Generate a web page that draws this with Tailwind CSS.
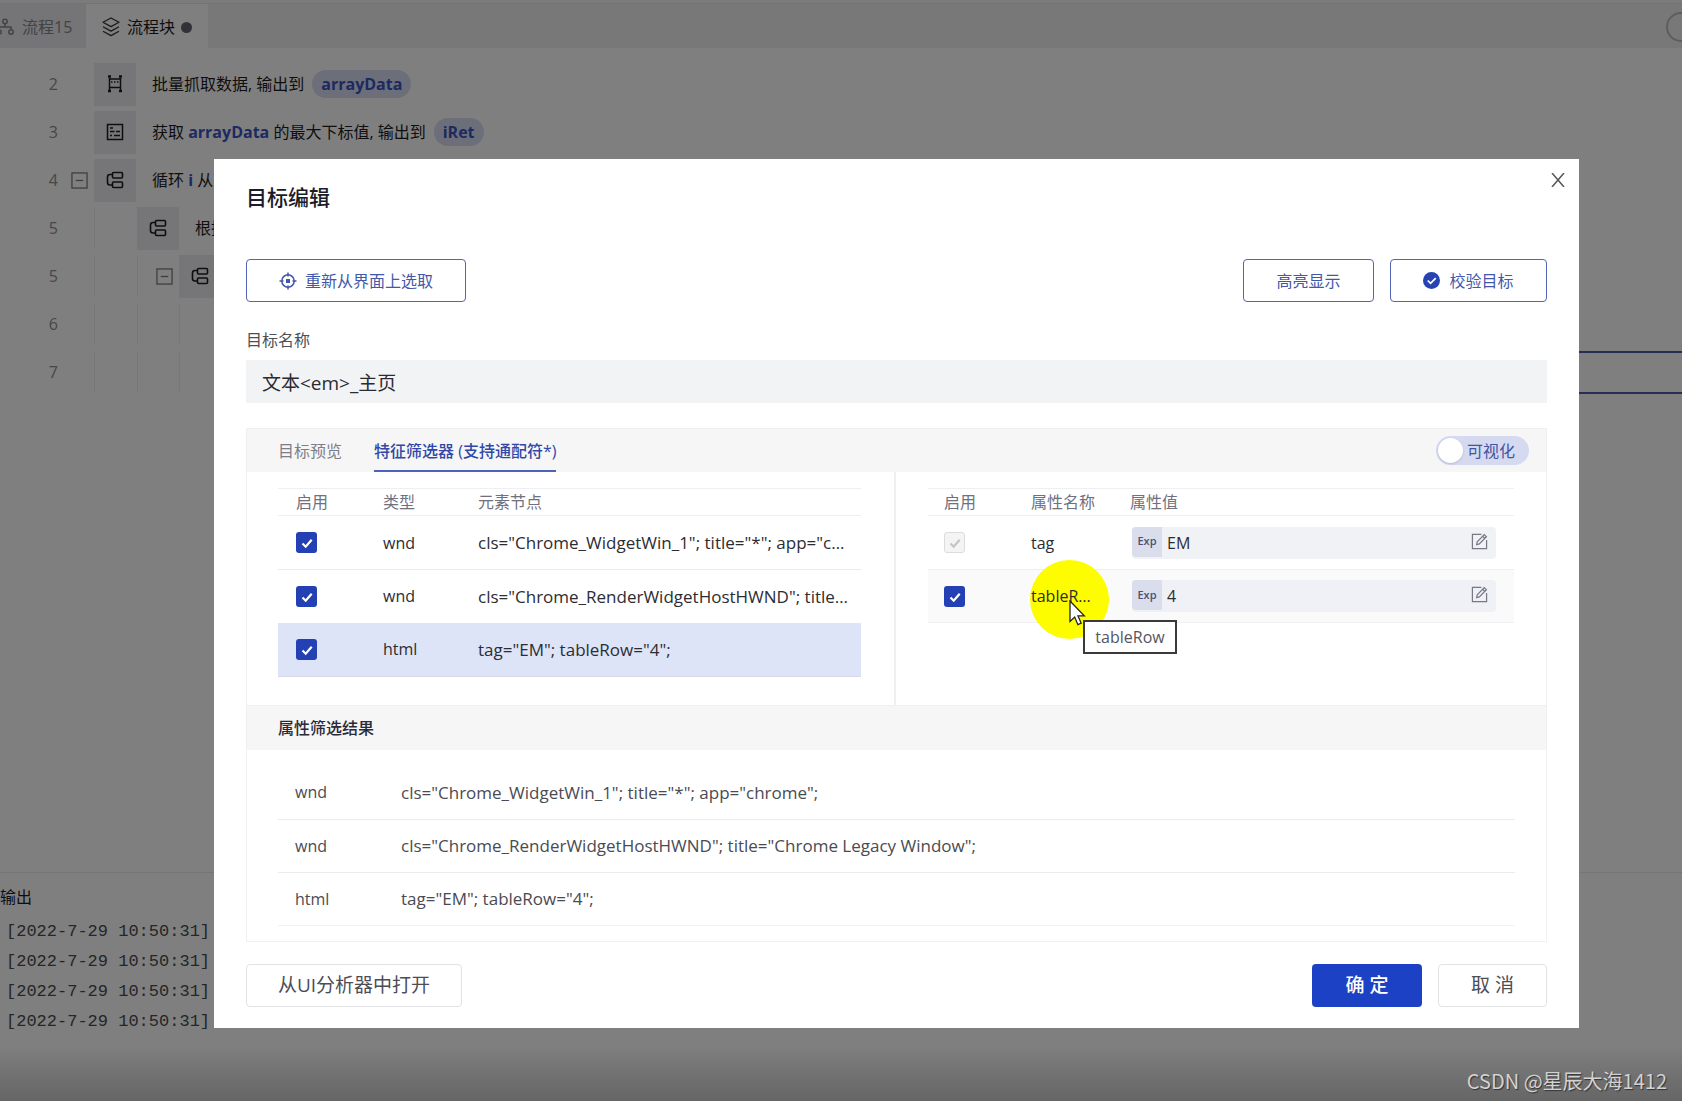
<!DOCTYPE html>
<html lang="zh-CN">
<head>
<meta charset="utf-8">
<meta name="viewport" content="width=device-width, initial-scale=1">
<title>目标编辑</title>
<script src="https://cdn.jsdelivr.net/npm/@tailwindcss/browser@4"></script>
</head>
<body class="relative min-h-screen overflow-hidden bg-white font-['Open_Sans','Noto_Sans_CJK_SC',sans-serif] text-base text-[#2c2d33]">

<svg class="hidden" aria-hidden="true">
  <symbol id="i-branch" viewBox="0 0 18 18"><g fill="none" stroke="currentColor" stroke-width="1.6"><rect x="6.5" y="1.500" width="10" height="5.500" rx="1"/><rect x="6.500" y="11" width="10" height="5.500" rx="1"/><path d="M6.500 3.500H4A2.500 2.500 0 0 0 1.500 6v5.500a2.500 2.500 0 0 0 2.500 2.500h2.500"/></g></symbol>
  <symbol id="i-minus" viewBox="0 0 18 18"><g fill="none" stroke="currentColor" stroke-width="1.300"><rect x="1" y="1" width="16" height="16"/><path d="M5 9h8"/></g></symbol>
  <symbol id="i-check" viewBox="0 0 14 14"><path d="M2.500 7.500l3.200 3.200 6-7" fill="none" stroke="currentColor" stroke-width="2.200"/></symbol>
  <symbol id="i-edit" viewBox="0 0 18 18"><g fill="none" stroke="currentColor" stroke-width="1.300"><path d="M11 1.500H1.500v15h15V7.500"/><path d="M6 12.300l.6-3L14 1.700l2.300 2.300-7.500 7.600z"/><path d="M12.300 3.500l2.300 2.300"/></g></symbol>
</svg>

<!-- Editor -->
<div class="flex h-screen flex-col" aria-hidden="true">
  <div class="h-1 border-b border-[#e6e6e8] bg-[#f6f6f6]"></div>
  <nav class="flex h-11 shrink-0 items-stretch bg-[#f0f0f3]">
    <a href="#" class="flex w-[86px] items-center gap-2 bg-[#ebebee] pt-[2px] text-[#85868a]">
      <svg class="-ml-1 h-[18px] w-[18px]" viewBox="0 0 18 18" fill="none" stroke="currentColor" stroke-width="1.500"><circle cx="9" cy="3.500" r="2.200"/><circle cx="3" cy="14" r="2.200"/><circle cx="15" cy="14" r="2.200"/><path d="M9 6v3M3 11.500V9h12v2.500"/></svg>
      流程15</a>
    <a href="#" class="flex items-center gap-[6px] bg-white pt-[2px] pr-4 pl-[15px] text-[#1c1c1c]">
      <svg class="h-5 w-5 text-[#333]" viewBox="0 0 20 20" fill="none" stroke="currentColor" stroke-width="1.300" stroke-linejoin="round"><path d="M10 1l8 4.300-8 4.300-8-4.300z"/><path d="M2 9.800l8 4.300 8-4.300M2 14.300l8 4.300 8-4.300"/></svg>
      流程块<span class="h-[11px] w-[11px] rounded-full bg-[#61656f]"></span></a>
    <span class="mt-2 -mr-4 ml-auto h-[30px] w-8 rounded-full border-2 border-[#bbb]"></span>
  </nav>

  <ol class="flex flex-1 flex-col pt-3 text-[#1c1c1c]">
    <li class="flex h-12 items-center">
      <span class="w-[58px] text-right text-[#8e8e90]">2</span>
      <span class="ml-9 flex h-[43px] w-[42px] items-center justify-center bg-[#ededf0]"><svg class="h-[18px] w-[18px]" viewBox="0 0 18 18" fill="none" stroke="currentColor" stroke-width="1.500"><path d="M3.500 3v12M14.500 3v12M4 4h10M4 12.500h10"/><path d="M5 7h8" stroke-dasharray="1.500 1.500"/><path d="M2 1.500h3M13 1.500h3M2 16h3M13 16h3" stroke-width="2.500"/></svg></span>
      <span class="ml-4">批量抓取数据, 输出到</span>
      <span class="ml-2 rounded-full bg-[#d9dff5] px-[9px] font-bold leading-7 text-[#3a55c4]">arrayData</span>
    </li>
    <li class="flex h-12 items-center">
      <span class="w-[58px] text-right text-[#8e8e90]">3</span>
      <span class="ml-9 flex h-[43px] w-[42px] items-center justify-center bg-[#ededf0]"><svg class="h-[18px] w-[18px]" viewBox="0 0 18 18" fill="none" stroke="currentColor" stroke-width="1.500"><rect x="1.500" y="1.500" width="15" height="15"/><path d="M4 5h3M4 8.500h4.500M10 8.500h4M4 12.500h2M8 12.500h6"/></svg></span>
      <span class="ml-4">获取 <b class="font-bold text-[#3a55c4]">arrayData</b> 的最大下标值, 输出到</span>
      <span class="ml-2 rounded-full bg-[#d9dff5] px-[9px] font-bold leading-7 text-[#3a55c4]">iRet</span>
    </li>
    <li class="flex h-12 items-center">
      <span class="w-[58px] text-right text-[#8e8e90]">4</span>
      <svg class="ml-[13px] h-[17px] w-[17px] text-[#777]"><use href="#i-minus"/></svg>
      <span class="ml-[6px] flex h-[43px] w-[42px] items-center justify-center bg-[#ededf0]"><svg class="h-[18px] w-[18px]"><use href="#i-branch"/></svg></span>
      <span class="ml-4">循环 <b class="font-bold text-[#3a55c4]">i</b> 从</span>
    </li>
    <li class="flex h-12 items-center">
      <span class="w-[58px] text-right text-[#8e8e90]">5</span>
      <span class="ml-9 h-10 w-[43px] border-l border-[#eee]"></span>
      <span class="flex h-[43px] w-[42px] items-center justify-center bg-[#ededf0]"><svg class="h-[18px] w-[18px]"><use href="#i-branch"/></svg></span>
      <span class="ml-4">根据</span>
    </li>
    <li class="flex h-12 items-center">
      <span class="w-[58px] text-right text-[#8e8e90]">5</span>
      <span class="ml-9 h-10 w-[43px] border-l border-[#eee]"></span>
      <span class="h-10 w-[19px] border-l border-[#eee]"></span>
      <svg class="h-[17px] w-[17px] text-[#777]"><use href="#i-minus"/></svg>
      <span class="ml-[6px] flex h-[43px] w-[42px] items-center justify-center bg-[#ededf0]"><svg class="h-[18px] w-[18px]"><use href="#i-branch"/></svg></span>
    </li>
    <li class="flex h-12 items-center">
      <span class="w-[58px] text-right text-[#8e8e90]">6</span>
      <span class="ml-9 h-10 w-[43px] border-l border-[#eee]"></span>
      <span class="h-10 w-[42px] border-l border-[#eee]"></span>
      <span class="h-10 w-[42px] border-l border-[#eee]"></span>
    </li>
    <li class="flex h-12 items-center">
      <span class="w-[58px] text-right text-[#8e8e90]">7</span>
      <span class="ml-9 h-10 w-[43px] border-l border-[#eee]"></span>
      <span class="h-10 w-[42px] border-l border-[#eee]"></span>
      <span class="h-10 w-[42px] border-l border-[#eee]"></span>
      <span class="h-[43px] flex-1 border-y-2 border-[#4b5fa8]"></span>
    </li>
  </ol>

  <section class="flex h-[229px] shrink-0 flex-col border-t border-[#ededed] pt-3">
    <h2 class="text-[#1c1c1c]">输出</h2>
    <div class="mt-2 pl-[6px] font-['Liberation_Mono',monospace] text-[17px] leading-[30px] text-[#4c4c4c]">
      <p>[2022-7-29 10:50:31]</p>
      <p>[2022-7-29 10:50:31]</p>
      <p>[2022-7-29 10:50:31]</p>
      <p>[2022-7-29 10:50:31]</p>
    </div>
  </section>
</div>

<!-- Dimmed backdrop with the dialog -->
<div class="absolute inset-0 bg-black/50 pt-[159px] pr-[103px] pl-[214px]">
  <div class="absolute inset-x-0 bottom-0 h-14 bg-linear-to-b from-transparent to-black/20"></div>
  <div role="dialog" aria-labelledby="dlg-title" class="relative bg-white px-8 pt-5 pb-[21px]">
    <button aria-label="关闭" class="absolute top-[14px] right-[14px] text-[#555]"><svg class="h-[14px] w-[14px]" viewBox="0 0 14 14" fill="none" stroke="currentColor" stroke-width="1.500"><path d="M1 0l12 14M13 0L1 14"/></svg></button>
    <h1 id="dlg-title" class="text-[21px] leading-9 font-medium text-[#1b1c26]">目标编辑</h1>

    <div class="mt-11 flex gap-4">
      <button class="flex h-[43px] w-[220px] items-center justify-center gap-2 rounded border border-[#5265b4] text-[#4358a8]">
        <svg class="h-[18px] w-[18px]" viewBox="0 0 18 18" fill="none" stroke="currentColor" stroke-width="1.500"><circle cx="9" cy="9" r="6.200"/><rect x="7" y="7" width="4" height="4" fill="currentColor" stroke="none"/><path d="M9 .5v4M9 13.500v4M.5 9h4M13.500 9h4"/></svg>
        重新从界面上选取</button>
      <button class="ml-auto h-[43px] w-[131px] rounded border border-[#5265b4] text-[#4358a8]">高亮显示</button>
      <button class="flex h-[43px] w-[157px] items-center justify-center gap-[9px] rounded border border-[#5265b4] text-[#4358a8]">
        <svg class="h-[17px] w-[17px]" viewBox="0 0 18 18"><circle cx="9" cy="9" r="9" fill="#2643b4"/><path d="M5 9l3 3 5.500-5.500" fill="none" stroke="#fff" stroke-width="1.800"/></svg>
        校验目标</button>
    </div>

    <label for="target-name" class="mt-[26px] block leading-6 text-[#4d4e57]">目标名称</label>
    <input id="target-name" value="文本&lt;em&gt;_主页" class="mt-2 block h-[43px] w-full bg-[#f2f3f5] px-4 text-[19px] text-[#2a2b30]">

    <section class="mt-[25px] border border-[#f0f0f1]">
      <div class="flex h-[43px] items-stretch bg-[#f6f6f7] pr-[17px] pl-[31px]">
        <a href="#" class="mr-8 flex items-center text-[#7d7e88]">目标预览</a>
        <a href="#" class="flex items-center border-b-2 border-[#4d62b8] pt-[2px] font-medium text-[#3048a8]">特征筛选器 (支持通配符*)</a>
        <label class="my-auto ml-auto flex h-[29px] w-[93px] items-center rounded-full bg-[#d5daf0] pl-[2px] text-[#4255a3]">
          <input type="checkbox" role="switch" class="mr-1 h-[25px] w-[25px] appearance-none rounded-full bg-white shadow">可视化</label>
      </div>

      <div class="grid grid-cols-[649fr_650fr]">
        <div class="border-r-2 border-[#f0f0f2] pt-4 pr-[33px] pb-7 pl-[31px]">
          <table class="w-full table-fixed border-collapse text-left">
            <thead>
              <tr class="h-[27px] border-y border-[#efeff1] text-[#6f7180]">
                <th class="w-[87px] pl-[18px] font-normal leading-[25px]">启用</th>
                <th class="w-[95px] pl-[18px] font-normal leading-[25px]">类型</th>
                <th class="pl-[18px] font-normal leading-[25px]">元素节点</th>
              </tr>
            </thead>
            <tbody>
              <tr class="h-[54px] border-b border-[#eaeceb]">
                <td class="pl-[18px]"><label class="relative block h-[21px] w-[21px]"><input type="checkbox" checked aria-label="启用" class="block h-[21px] w-[21px] appearance-none rounded-[3px] bg-[#2340b4]"><svg class="absolute top-1 left-1 h-[14px] w-[14px] text-white"><use href="#i-check"/></svg></label></td>
                <td class="pl-[18px]">wnd</td>
                <td class="truncate pr-[10px] pl-[18px] text-[17px]">cls="Chrome_WidgetWin_1"; title="*"; app="chrome";</td>
              </tr>
              <tr class="h-[53px]">
                <td class="pl-[18px]"><label class="relative block h-[21px] w-[21px]"><input type="checkbox" checked aria-label="启用" class="block h-[21px] w-[21px] appearance-none rounded-[3px] bg-[#2340b4]"><svg class="absolute top-1 left-1 h-[14px] w-[14px] text-white"><use href="#i-check"/></svg></label></td>
                <td class="pl-[18px]">wnd</td>
                <td class="truncate pr-[10px] pl-[18px] text-[17px]">cls="Chrome_RenderWidgetHostHWND"; title="Chrome Legacy Window";</td>
              </tr>
              <tr class="h-[54px] border-b border-[#d5d9ea] bg-[#dde4f8]">
                <td class="pl-[18px]"><label class="relative block h-[21px] w-[21px]"><input type="checkbox" checked aria-label="启用" class="block h-[21px] w-[21px] appearance-none rounded-[3px] bg-[#2340b4]"><svg class="absolute top-1 left-1 h-[14px] w-[14px] text-white"><use href="#i-check"/></svg></label></td>
                <td class="pl-[18px]">html</td>
                <td class="truncate pr-[10px] pl-[18px] text-[17px]">tag="EM"; tableRow="4";</td>
              </tr>
            </tbody>
          </table>
        </div>

        <div class="pt-4 pr-8 pb-[29px] pl-8">
          <table class="w-full table-fixed border-collapse text-left">
            <thead>
              <tr class="h-[27px] border-y border-[#efeff1] text-[#6f7180]">
                <th class="w-[87px] pl-4 font-normal leading-[25px]">启用</th>
                <th class="w-[99px] pl-4 font-normal leading-[25px]">属性名称</th>
                <th class="pl-4 font-normal leading-[25px]">属性值</th>
              </tr>
            </thead>
            <tbody>
              <tr class="h-[54px] border-b border-[#eeeef0]">
                <td class="pl-4"><label class="relative block h-[21px] w-[21px]"><input type="checkbox" checked disabled aria-label="启用" class="block h-[21px] w-[21px] appearance-none rounded-[3px] border border-[#dcdcdc] bg-[#f4f4f4]"><svg class="absolute top-1 left-1 h-[14px] w-[14px] text-[#c4c4c4]"><use href="#i-check"/></svg></label></td>
                <td class="pl-4">tag</td>
                <td class="pr-[18px] pl-[18px]">
                  <div class="flex h-8 items-start rounded bg-[#f1f2f5]">
                    <span class="flex h-[30px] w-[30px] items-center justify-center rounded-l bg-[#d9ddec] text-[11px] font-semibold text-[#4a5170]">Exp</span>
                    <input aria-label="tag" value="EM" class="h-8 min-w-0 flex-1 bg-transparent pl-[5px]">
                    <button aria-label="编辑" class="mt-[6px] mr-2 text-[#777985]"><svg class="h-[17px] w-[17px]"><use href="#i-edit"/></svg></button>
                  </div>
                </td>
              </tr>
              <tr class="h-[53px] border-b border-[#f0f0f2] bg-[#fafafb]">
                <td class="pl-4"><label class="relative block h-[21px] w-[21px]"><input type="checkbox" checked aria-label="启用" class="block h-[21px] w-[21px] appearance-none rounded-[3px] bg-[#2340b4]"><svg class="absolute top-1 left-1 h-[14px] w-[14px] text-white"><use href="#i-check"/></svg></label></td>
                <td class="pl-4">
                  <div class="relative">
                    <span class="absolute -top-6 -left-px h-[79px] w-[79px] rounded-full bg-[#fdfd00]"></span>
                    <span class="relative block w-[62px] truncate">tableRow</span>
                    <svg class="absolute top-4 left-[38px] z-20 h-[26px] w-[17px]" viewBox="0 0 17 26"><path d="M1 1v20.500l4.700-4.400 3.200 7.600 3.300-1.500-3.200-7.300h6.300z" fill="#fff" stroke="#222" stroke-width="1.300"/></svg>
                    <div role="tooltip" class="absolute top-9 left-[52px] z-10 h-[34px] w-[94px] border-2 border-[#3a3a3a] bg-white text-center leading-[30px] text-[#55565c]">tableRow</div>
                  </div>
                </td>
                <td class="pr-[18px] pl-[18px]">
                  <div class="flex h-8 items-start rounded bg-[#eff1f6]">
                    <span class="flex h-[30px] w-[30px] items-center justify-center rounded-l bg-[#d9ddec] text-[11px] font-semibold text-[#4a5170]">Exp</span>
                    <input aria-label="tableRow" value="4" class="h-8 min-w-0 flex-1 bg-transparent pl-[5px]">
                    <button aria-label="编辑" class="mt-[6px] mr-2 text-[#777985]"><svg class="h-[17px] w-[17px]"><use href="#i-edit"/></svg></button>
                  </div>
                </td>
              </tr>
            </tbody>
          </table>
        </div>
      </div>

      <h2 class="h-[45px] border-t border-[#f0f0f1] bg-[#f6f6f7] pl-[31px] leading-[45px] font-medium text-[#2a2b3a]">属性筛选结果</h2>
      <div class="px-[31px] pt-4 pb-[15px]">
        <table class="w-full table-fixed border-collapse text-left text-[#4a4b52]">
          <tbody>
            <tr class="h-[53px] border-b border-[#ececee]"><td class="w-[107px] pl-[17px]">wnd</td><td class="pl-4 text-[17px]">cls="Chrome_WidgetWin_1"; title="*"; app="chrome";</td></tr>
            <tr class="h-[53px] border-b border-[#ececee]"><td class="pl-[17px]">wnd</td><td class="pl-4 text-[17px]">cls="Chrome_RenderWidgetHostHWND"; title="Chrome Legacy Window";</td></tr>
            <tr class="h-[53px] border-b border-[#f2f2f4]"><td class="pl-[17px]">html</td><td class="pl-4 text-[17px]">tag="EM"; tableRow="4";</td></tr>
          </tbody>
        </table>
      </div>
    </section>

    <footer class="mt-[22px] flex gap-4 text-[19px]">
      <button class="h-[43px] w-[216px] rounded border border-[#e2e2e4] text-[#4c4d55]">从UI分析器中打开</button>
      <button class="ml-auto h-[43px] w-[110px] rounded bg-[#1d41c4] font-medium text-white">确 定</button>
      <button class="h-[43px] w-[109px] rounded border border-[#e2e2e4] text-[#4c4d55]">取 消</button>
    </footer>
  </div>
  <p class="absolute right-[15px] bottom-1 font-['Noto_Sans_CJK_SC',sans-serif] text-xl leading-8 text-[#d2d2d2] [text-shadow:1px_1px_1px_#333]">CSDN @星辰大海1412</p>
</div>
</body>
</html>
